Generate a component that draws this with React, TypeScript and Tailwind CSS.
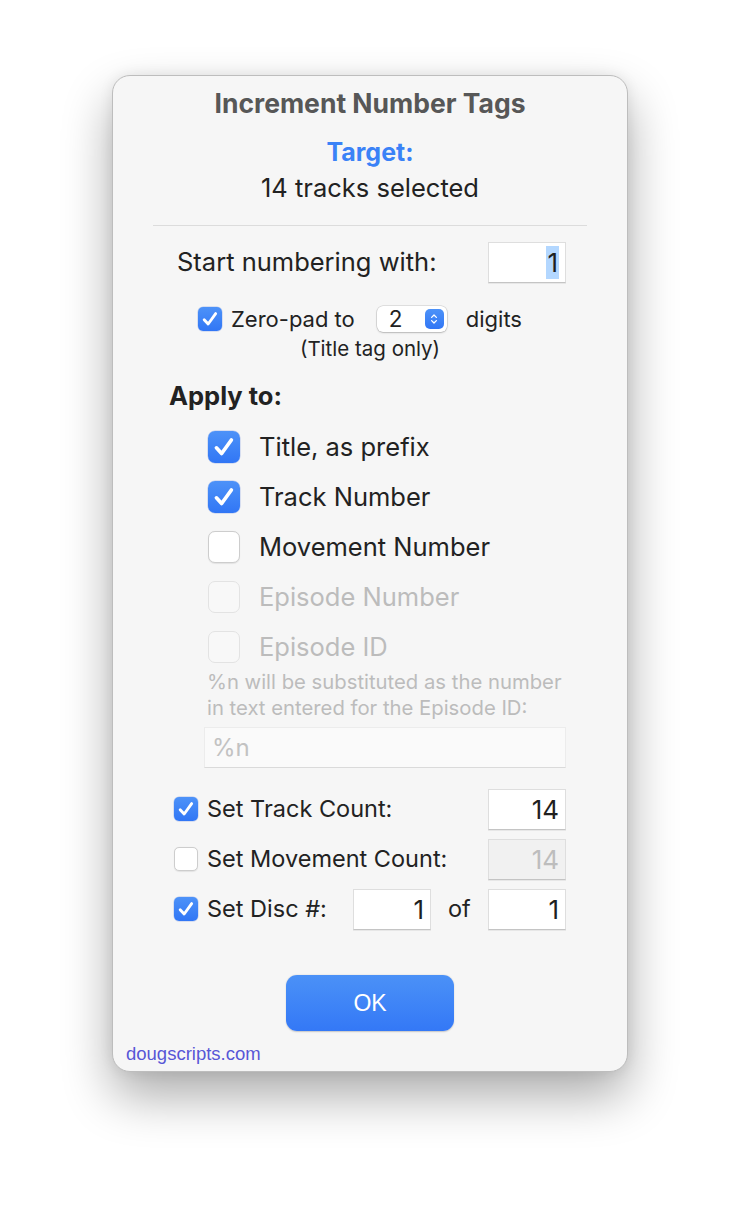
import React from 'react';

const sf = { fontFamily: 'Inter, "Liberation Sans", sans-serif' };

function Check({ size = 'sm', state = 'on' }: { size?: 'sm' | 'lg'; state?: 'on' | 'off' | 'disabled' }) {
  const box = size === 'lg' ? 'w-[32px] h-[32px] rounded-[7px]' : 'w-[24px] h-[24px] rounded-[5px]';
  if (state === 'on') {
    return (
      <div className={`${box} shrink-0 flex items-center justify-center bg-gradient-to-b from-[#4d92f8] to-[#3176f5] shadow-[0_0_0_0.5px_rgba(0,60,200,0.25)]`}>
        <svg viewBox="0 0 24 24" className={size === 'lg' ? 'w-[26px] h-[26px]' : 'w-[20px] h-[20px]'} fill="none">
          <path d="M5 12.8 L9.8 18 L18.8 5.5" stroke="white" strokeWidth="3.4" strokeLinecap="round" strokeLinejoin="round" />
        </svg>
      </div>
    );
  }
  if (state === 'off') {
    return <div className={`${box} shrink-0 bg-white border border-[#cdcdcd] shadow-[0_0.5px_1px_rgba(0,0,0,0.08)]`} />;
  }
  return <div className={`${box} shrink-0 bg-[#f8f8f8] border border-[#e3e3e3]`} />;
}

function Field({ value, className = '', disabled = false, selected = false }: { value: string; className?: string; disabled?: boolean; selected?: boolean }) {
  return (
    <div
      className={`h-[41px] flex items-center justify-end pr-[6px] text-[26px] ${disabled ? 'bg-[#f1f1f1] text-[#bdbdbd]' : 'bg-white text-[#1f1f1f]'} border border-[#dedede] border-b-[#c4c4c4] shadow-[0_1px_0_rgba(0,0,0,0.06)] ${className}`}
    >
      {selected ? <span className="bg-[#b3d7ff] leading-[33px] px-[1px]">{value}</span> : value}
    </div>
  );
}

export default function App() {
  return (
    <div className="min-h-screen w-full bg-white flex justify-center pt-[75px]" style={sf}>
      <div className="w-[516px] h-[997px] rounded-[18px] bg-[#f6f6f6] border border-[#bdbdbd] shadow-[0_24px_50px_rgba(0,0,0,0.33),0_0_14px_rgba(0,0,0,0.08)] flex flex-col overflow-hidden">
        {/* header */}
        <div className="pt-[11px] text-center">
          <div className="text-[26.5px] leading-[32px] font-bold text-[#575757]">Increment Number Tags</div>
          <div className="mt-[17px] text-[25px] leading-[32px] font-bold text-[#3a82f7]">Target:</div>
          <div className="mt-[4px] text-[25.5px] leading-[32px] text-[#222]">14 tracks selected</div>
        </div>
        <div className="mt-[21px] mx-[40px] h-px bg-[#dcdcdc]" />

        {/* start numbering */}
        <div className="mt-[16px] flex items-center justify-between pl-[64px] pr-[61px] text-[25.5px] text-[#222]">
          <span>Start numbering with:</span>
          <Field value="1" className="w-[78px] h-[40px]" selected />
        </div>

        {/* zero-pad */}
        <div className="mt-[23px] h-[26px] flex items-center pl-[85px] text-[22px] text-[#222]">
          <Check />
          <span className="ml-[9px]">Zero-pad to</span>
          <div className="ml-[22px] w-[70px] h-[26px] rounded-[6px] bg-white shadow-[0_0_0_0.5px_rgba(0,0,0,0.18),0_1px_2px_rgba(0,0,0,0.18)] flex items-center justify-between pl-[12px] pr-[3px]">
            <span className="text-[22.5px]">2</span>
            <div className="w-[19px] h-[20px] rounded-[5px] bg-gradient-to-b from-[#4d92f8] to-[#3176f5] flex items-center justify-center">
              <svg viewBox="0 0 10 14" className="w-[8px] h-[12px]" fill="none">
                <path d="M2 5 L5 2 L8 5 M2 9 L5 12 L8 9" stroke="white" strokeWidth="1.6" strokeLinecap="round" strokeLinejoin="round" />
              </svg>
            </div>
          </div>
          <span className="ml-[19px]">digits</span>
        </div>
        <div className="mt-[5px] text-center text-[20.5px] leading-[24px] text-[#222]">(Title tag only)</div>

        {/* apply to */}
        <div className="mt-[19px] pl-[56px] text-[25.5px] leading-[32px] font-bold text-[#222]">Apply to:</div>
        <div className="mt-[10px] flex flex-col text-[25.5px]">
          {[
            { label: 'Title, as prefix', state: 'on' as const },
            { label: 'Track Number', state: 'on' as const },
            { label: 'Movement Number', state: 'off' as const },
            { label: 'Episode Number', state: 'disabled' as const },
            { label: 'Episode ID', state: 'disabled' as const },
          ].map((r) => (
            <div key={r.label} className="h-[50px] flex items-center pl-[95px]">
              <Check size="lg" state={r.state} />
              <span className={`ml-[19px] ${r.state === 'disabled' ? 'text-[#bcbcbc]' : 'text-[#222]'}`}>{r.label}</span>
            </div>
          ))}
        </div>
        <div className="-mt-[3px] pl-[94px] text-[20.3px] leading-[26px] text-[#bcbcbc]">
          <div>%n will be substituted as the number</div>
          <div>in text entered for the Episode ID:</div>
        </div>
        <div className="mt-[6px] ml-[91px] w-[362px] h-[41px] bg-[#fafafa] border border-[#ececec] border-b-[#dadada] flex items-center pl-[7px] text-[24px] text-[#c2c2c2]">
          %n
        </div>

        {/* counts */}
        <div className="mt-[16px] flex flex-col text-[23.5px] text-[#222]">
          <div className="h-[50px] flex items-center pl-[61px] pr-[61px]">
            <Check />
            <span className="ml-[9px]">Set Track Count:</span>
            <Field value="14" className="ml-auto w-[78px]" />
          </div>
          <div className="h-[50px] flex items-center pl-[61px] pr-[61px]">
            <Check state="off" />
            <span className="ml-[9px]">Set Movement Count:</span>
            <Field value="14" className="ml-auto w-[78px]" disabled />
          </div>
          <div className="h-[50px] flex items-center pl-[61px] pr-[61px]">
            <Check />
            <span className="ml-[9px] w-[146px]">Set Disc #:</span>
            <Field value="1" className="w-[78px]" />
            <span className="ml-[17px]">of</span>
            <Field value="1" className="ml-auto w-[78px]" />
          </div>
        </div>

        {/* ok */}
        <div className="mt-[41px] flex justify-center">
          <div
            className="w-[168px] h-[56px] rounded-[11px] bg-gradient-to-b from-[#4b91f7] to-[#3478f6] shadow-[0_0.5px_1.5px_rgba(0,0,0,0.2)] flex items-center justify-center text-white text-[23px]"
            style={{ fontFamily: '"Liberation Sans", Arial, sans-serif' }}
          >
            OK
          </div>
        </div>
        <div
          className="mt-[12px] pl-[13px] text-[18.5px] leading-[22px] text-[#5856d6]"
          style={{ fontFamily: '"Liberation Sans", Arial, sans-serif' }}
        >
          dougscripts.com
        </div>
      </div>
    </div>
  );
}
